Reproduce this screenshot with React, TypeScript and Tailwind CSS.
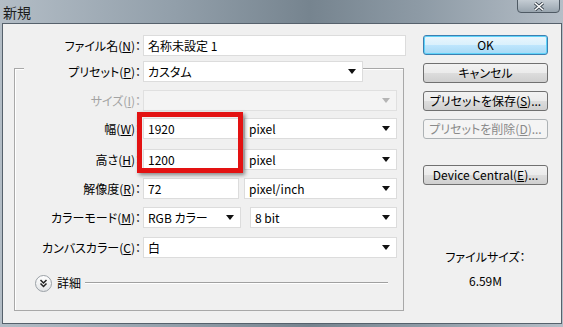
import React from 'react'

const Arrow = ({ disabled = false }: { disabled?: boolean }) => (
  <svg width="8" height="5" viewBox="0 0 8 5" className="shrink-0">
    <path d="M0 0 H8 L4 5 Z" fill={disabled ? '#b5b5b5' : '#111'} />
  </svg>
)

const Mn = ({ children }: { children: React.ReactNode }) => <span className="underline underline-offset-[1px]">{children}</span>

const Field = ({ value, w }: { value: string; w: string }) => (
  <div className={`${w} h-[21px] bg-white border border-[#dcdcdc] flex items-center pl-[4px]`}>{value}</div>
)

const Combo = ({ value, w, disabled = false }: { value: string; w: string; disabled?: boolean }) => (
  <div
    className={`${w} h-[21px] border flex items-center justify-between pl-[4px] pr-[6px] ${
      disabled ? 'bg-[#f4f4f4] border-[#e0e0e0]' : 'bg-white border-[#dcdcdc]'
    }`}
  >
    <span>{value}</span>
    <Arrow disabled={disabled} />
  </div>
)

const Label = ({ children, w, muted = false }: { children: React.ReactNode; w: string; muted?: boolean }) => (
  <div className={`${w} text-right whitespace-nowrap ${muted ? 'text-[#a3a3a3]' : ''}`}>{children}</div>
)

const Button = ({ children, kind = 'normal' }: { children: React.ReactNode; kind?: 'normal' | 'default' | 'disabled' }) => {
  const styles = {
    normal: 'border-[#707070] bg-[linear-gradient(#f2f2f2_0%,#ebebeb_50%,#dddddd_50%,#cfcfcf_100%)]',
    default:
      'border-[#3c7fb1] bg-[linear-gradient(#eaf6fd_0%,#d9f0fc_50%,#bee6fd_50%,#a7d9f5_100%)] shadow-[inset_0_0_0_1px_#5fd3f9]',
    disabled: 'border-[#adb2b5] bg-[#f4f4f4] text-[#8a8a8a]',
  }
  return (
    <div className={`w-[125px] h-[20px] rounded-[3px] border flex items-center justify-center ${styles[kind]}`}>{children}</div>
  )
}

export default function App() {
  return (
    <div className="relative w-[563px] h-[327px] overflow-hidden bg-[linear-gradient(90deg,#b3bdc6_0%,#93a0ab_30%,#76848f_55%,#8e9ba6_75%,#b5bec7_100%)] font-['Noto_Sans_CJK_JP',sans-serif] text-[12px] leading-[16px] text-black [font-feature-settings:'palt']">
      <div className="h-[23px] flex items-center pl-[3px] text-[14px] text-[#1c1c1c]">新規</div>

      <div className="ml-[2px] w-[560px] h-[301px] border border-[#56616c] bg-[#f0f0f0] flex">
        <div className="w-[420px] pt-[11px]">
          <div className="flex items-center h-[21px]">
            <Label w="w-[138px]">
              ファイル名(<Mn>N</Mn>)：
            </Label>
            <div className="ml-[2px]">
              <Field value="名称未設定 1" w="w-[263px]" />
            </div>
          </div>

          <div className="mt-[12px] ml-[11px] w-[390px] h-[243px] border border-[#a8a8a8] shadow-[inset_1px_1px_0_#ffffff]">
            <div className="-mt-[8px] flex h-[21px]">
              <div className="w-[9px]" />
              <div className="flex items-center bg-[#f0f0f0]">
                <Label w="w-[117px]">
                  プリセット(<Mn>P</Mn>)：
                </Label>
                <div className="ml-[2px]">
                  <Combo value="カスタム" w="w-[220px]" />
                </div>
              </div>
            </div>

            <div className="mt-[8px] flex items-center h-[21px]">
              <Label w="w-[126px]" muted>
                サイズ(<Mn>I</Mn>)：
              </Label>
              <div className="ml-[2px]">
                <Combo value="" w="w-[254px]" disabled />
              </div>
            </div>

            <div className="mt-[7px] flex items-center h-[21px]">
              <Label w="w-[126px]">
                幅(<Mn>W</Mn>)：
              </Label>
              <div className="ml-[2px] flex gap-[5px]">
                <Field value="1920" w="w-[96px]" />
                <Combo value="pixel" w="w-[153px]" />
              </div>
            </div>

            <div className="mt-[10px] flex items-center h-[21px]">
              <Label w="w-[126px]">
                高さ(<Mn>H</Mn>)：
              </Label>
              <div className="ml-[2px] flex gap-[5px]">
                <Field value="1200" w="w-[96px]" />
                <Combo value="pixel" w="w-[153px]" />
              </div>
            </div>

            <div className="mt-[8px] flex items-center h-[21px]">
              <Label w="w-[126px]">
                解像度(<Mn>R</Mn>)：
              </Label>
              <div className="ml-[2px] flex gap-[5px]">
                <Field value="72" w="w-[96px]" />
                <Combo value="pixel/inch" w="w-[153px]" />
              </div>
            </div>

            <div className="mt-[8px] flex items-center h-[21px]">
              <Label w="w-[126px]">
                カラーモード(<Mn>M</Mn>)：
              </Label>
              <div className="ml-[2px] flex gap-[9px]">
                <Combo value="RGB カラー" w="w-[98px]" />
                <Combo value="8 bit" w="w-[147px]" />
              </div>
            </div>

            <div className="mt-[9px] flex items-center h-[21px]">
              <Label w="w-[126px]">
                カンバスカラー(<Mn>C</Mn>)：
              </Label>
              <div className="ml-[2px]">
                <Combo value="白" w="w-[254px]" />
              </div>
            </div>

            <div className="mt-[17px] flex items-center h-[16px]">
              <div className="ml-[20px] w-[17px] h-[17px] rounded-full border border-[#9aa0a6] bg-[linear-gradient(#ffffff,#e2e4e6)] flex items-center justify-center">
                <svg width="9" height="9" viewBox="0 0 9 9">
                  <path d="M1.5 1 L4.5 4 L7.5 1 M1.5 4.5 L4.5 7.5 L7.5 4.5" fill="none" stroke="#222" strokeWidth="1.5" />
                </svg>
              </div>
              <span className="ml-[5px]">詳細</span>
              <div className="ml-[4px] mr-[15px] flex-1 h-[2px] border-t border-[#a0a0a0] border-b border-b-white" />
            </div>
          </div>
        </div>

        <div className="w-[125px] pt-[11px] flex flex-col">
          <Button kind="default">OK</Button>
          <div className="mt-[8px]">
            <Button>キャンセル</Button>
          </div>
          <div className="mt-[8px]">
            <Button>
              プリセットを保存(<Mn>S</Mn>)...
            </Button>
          </div>
          <div className="mt-[8px]">
            <Button kind="disabled">
              プリセットを削除(<Mn>D</Mn>)...
            </Button>
          </div>
          <div className="mt-[26px]">
            <Button>
              Device Central(<Mn>E</Mn>)...
            </Button>
          </div>
          <div className="mt-[64px] text-center">ファイルサイズ：</div>
          <div className="mt-[8px] text-center">6.59M</div>
        </div>
      </div>

      <div className="absolute left-[517px] -top-[1px] w-[43px] h-[14px] rounded-b-[4px] border border-[#4f5a64] bg-[linear-gradient(#c4ccd3,#98a4ae)] flex items-center justify-center">
        <svg width="12" height="9" viewBox="0 0 12 9">
          <path d="M2 1 L10 8 M10 1 L2 8" stroke="#3a434c" strokeWidth="3.2" />
          <path d="M2 1 L10 8 M10 1 L2 8" stroke="#ffffff" strokeWidth="1.6" />
        </svg>
      </div>

      <div className="absolute left-[137px] top-[112px] w-[106px] h-[61px] border-[5px] border-[#e31212] shadow-[2px_2px_4px_rgba(0,0,0,0.45)]" />
    </div>
  )
}
